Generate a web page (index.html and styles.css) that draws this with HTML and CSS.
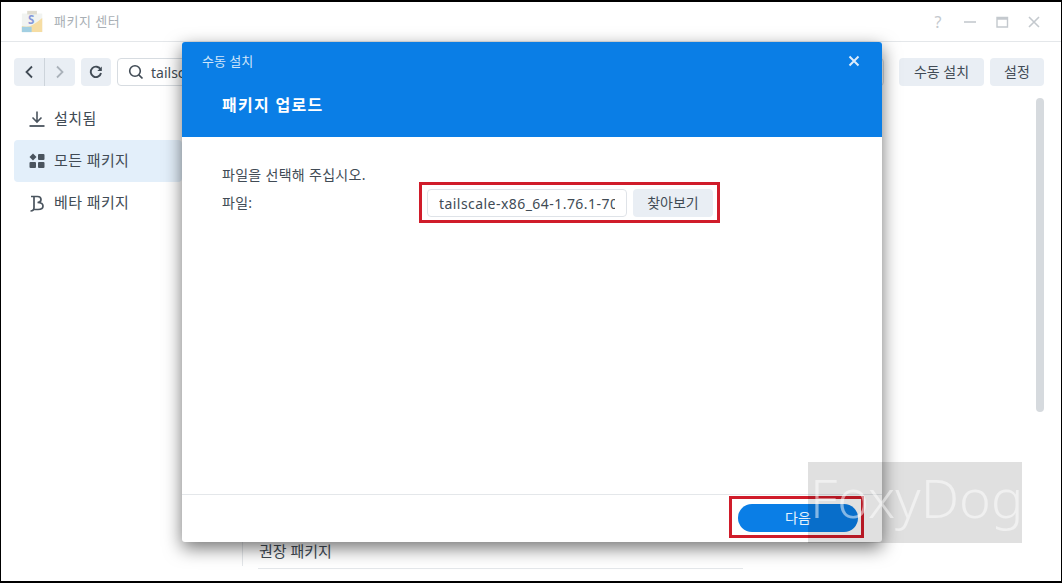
FILE: index.html
```html
<!DOCTYPE html>
<html lang="ko">
<head>
<meta charset="utf-8">
<title>패키지 센터</title>
<link rel="stylesheet" href="styles.css">
</head>
<body>
<div class="window">
  <header class="titlebar">
    <svg class="app-icon" width="23" height="23" viewBox="0 0 26 26">
      <rect x="1" y="4" width="23" height="21" fill="#eef1ee"/>
      <rect x="7" y="1" width="11" height="4" fill="#d8d4c4"/>
      <path d="M1 25V18Q8 20 13 17T24 9V25Z" fill="#f4d58d"/>
      <rect x="1" y="19" width="11" height="6" fill="#8cc4dc"/>
      <text x="8" y="16" class="app-s">S</text>
    </svg>
    <span class="app-title">패키지 센터</span>
    <div class="win-controls">
      <span class="win-q">?</span>
      <svg width="14" height="14" viewBox="0 0 14 14"><path d="M1 7H13" stroke="#c4c9ce" stroke-width="1.6"/></svg>
      <svg width="14" height="14" viewBox="0 0 14 14"><path d="M2 2.500H12.500V12H2Z" fill="none" stroke="#c4c9ce" stroke-width="1.400"/><path d="M2 3.500H12.500" stroke="#c4c9ce" stroke-width="2.500"/></svg>
      <svg width="14" height="14" viewBox="0 0 14 14"><path d="M2 2L12 12M12 2L2 12" stroke="#c4c9ce" stroke-width="1.600"/></svg>
    </div>
  </header>
  <div class="toolbar">
    <div class="nav-group">
      <span class="nav-btn"><svg width="10" height="14" viewBox="0 0 10 14"><path d="M8 1.500L2.500 7L8 12.500" fill="none" stroke="#414b55" stroke-width="1.800"/></svg></span>
      <span class="nav-btn nav-next"><svg width="10" height="14" viewBox="0 0 10 14"><path d="M2 1.500L7.500 7L2 12.500" fill="none" stroke="#aab2ba" stroke-width="1.800"/></svg></span>
    </div>
    <span class="tool-btn"><svg width="14" height="14" viewBox="0 0 14 14"><path d="M11.600 4.600A5.200 5.200 0 1 0 12 8" fill="none" stroke="#414b55" stroke-width="1.900"/><path d="M12.800 1.500V6H8.300Z" fill="#414b55"/></svg></span>
    <div class="search">
      <svg width="16" height="16" viewBox="0 0 16 16"><circle cx="7" cy="7" r="5.300" fill="none" stroke="#414b55" stroke-width="1.600"/><path d="M10.800 10.800L14.500 14.500" stroke="#414b55" stroke-width="1.700"/></svg>
      <span>tailscale</span>
    </div>
    <button class="btn btn-manual">수동 설치</button>
    <button class="btn btn-settings">설정</button>
  </div>
  <div class="content">
    <nav class="sidebar">
      <a class="side-item">
        <svg width="18" height="18" viewBox="0 0 18 18"><path d="M9 1.500V11.500M4.500 7.500L9 12L13.500 7.500" fill="none" stroke="#4a545e" stroke-width="1.600"/><path d="M1.500 16H16.500" stroke="#4a545e" stroke-width="1.800"/></svg>
        <span>설치됨</span>
      </a>
      <a class="side-item active">
        <svg width="18" height="18" viewBox="0 0 18 18" fill="#4a545e"><path d="M5 1.500L8.500 5L5 8.500L1.500 5Z"/><rect x="10" y="2" width="6.500" height="6" rx="1"/><rect x="1.500" y="10" width="6.500" height="6" rx="1"/><rect x="10" y="10" width="6.500" height="6" rx="1"/></svg>
        <span>모든 패키지</span>
      </a>
      <a class="side-item">
        <svg width="18" height="18" viewBox="0 0 18 18"><path d="M3 2.500H9.500Q13 2.500 13 5.500T9.500 8.500Q15 8.500 15 12T10 15.500H6M6 2.500V13.500Q6 17 2.500 17" fill="none" stroke="#4a545e" stroke-width="1.700"/></svg>
        <span>베타 패키지</span>
      </a>
    </nav>
    <main class="main">
      <div class="main-inner">
        <h2 class="section-title">권장 패키지</h2>
        <div class="section-rule"></div>
      </div>
      <div class="scrollbar"></div>
    </main>
  </div>

  <section class="dialog">
    <div class="dialog-head">
      <div class="dialog-topline">
        <span class="dialog-kicker">수동 설치</span>
        <svg width="12" height="12" viewBox="0 0 12 12"><path d="M1.500 1.500L10.500 10.500M10.500 1.500L1.500 10.500" stroke="#dcecfb" stroke-width="2"/></svg>
      </div>
      <h1 class="dialog-title">패키지 업로드</h1>
    </div>
    <div class="dialog-body">
      <p class="hint">파일을 선택해 주십시오.</p>
      <div class="file-row">
        <label class="file-label">파일:</label>
        <div class="file-input"><span>tailscale-x86_64-1.76.1-7000</span></div>
        <button class="btn btn-browse">찾아보기</button>
      </div>
    </div>
    <div class="dialog-foot">
      <button class="btn-next">다음</button>
    </div>
  </section>

  <div class="mark mark-file"></div>
  <div class="mark mark-next"></div>
  <div class="watermark">FoxyDog</div>
</div>
</body>
</html>
```
FILE: styles.css
```css
* { box-sizing: border-box; }
html, body { margin: 0; height: 100%; background: #000; overflow: hidden; }
body { font-family: "Noto Sans", "Noto Sans CJK KR", sans-serif; color: #414b55; }
.window {
  position: relative;
  width: 1060px;
  height: 579px;
  margin: 2px 0 0 1px;
  background: #fff;
  display: flex;
  flex-direction: column;
  overflow: hidden;
}
.titlebar {
  height: 40px;
  flex: none;
  display: flex;
  align-items: center;
  padding: 0 20px 0 20px;
  border-bottom: 1px solid #e4e7ea;
}
.app-icon { flex: none; opacity: .8; }
.app-s { font: bold 13px "Noto Sans", sans-serif; fill: #6a7fd0; }
.app-title { margin-left: 10px; font-size: 13px; letter-spacing: .5px; color: #a9afb5; padding-bottom: 2px; }
.win-controls { margin-left: auto; display: flex; align-items: center; gap: 18px; }
.win-q { font-size: 16px; color: #c4c9ce; width: 14px; text-align: center; line-height: 14px; }
.toolbar {
  height: 60px;
  flex: none;
  display: flex;
  align-items: center;
  padding: 0 17px 0 13px;
}
.nav-group { display: flex; height: 28px; border-radius: 4px; background: #e9eef4; }
.nav-btn { width: 30px; display: flex; align-items: center; justify-content: center; }
.nav-next { width: 31px; border-left: 1px solid #cdd4db; }
.tool-btn { margin-left: 6px; width: 30px; height: 28px; border-radius: 4px; background: #e9eef4; display: flex; align-items: center; justify-content: center; }
.search {
  margin-left: 6px;
  width: 767px;
  height: 28px;
  border: 1px solid #d7dce1;
  border-radius: 4px;
  display: flex;
  align-items: center;
  gap: 7px;
  padding-left: 10px;
  font-size: 14px;
}
.btn {
  border: 0;
  border-radius: 4px;
  background: #e9eef4;
  color: #414b55;
  font: 14px "Noto Sans", "Noto Sans CJK KR", sans-serif;
  height: 28px;
  padding: 0 0 2px;
}
.btn-manual { margin-left: 15px; width: 85px; }
.btn-settings { margin-left: 6px; width: 54px; }
.content { flex: 1; min-height: 0; display: flex; }
.sidebar { width: 168px; margin: -4px 0 0 13px; flex: none; }
.side-item {
  height: 42px;
  display: flex;
  align-items: center;
  gap: 8px;
  padding-left: 14px;
  font-size: 15px;
  letter-spacing: .4px;
  border-radius: 4px;
  color: #414b55;
}
.side-item span { padding-bottom: 4px; }
.side-item svg { flex: none; }
.side-item.active { background: #e3effa; }
.main { flex: 1; position: relative; padding-left: 60px; min-width: 0; }
.main-inner { height: 100%; position: relative; display: flex; flex-direction: column; justify-content: flex-end; padding-bottom: 12px; width: 501px; }
.section-title { margin: 0 0 8px 17px; font-size: 15px; font-weight: 400; line-height: 18px; }
.section-rule { margin-left: 16px; height: 1px; background: #e4e7ea; }
.main-inner::before { content: ""; position: absolute; left: 0; bottom: 15px; height: 30px; width: 1px; background: #e4e7ea; }
.scrollbar { position: absolute; top: -4px; right: 17px; width: 8px; height: 314px; border-radius: 4px; background: #d6dade; }

.dialog {
  position: absolute;
  left: 181px;
  top: 40px;
  width: 700px;
  height: 500px;
  background: #fff;
  border-radius: 3px;
  display: flex;
  flex-direction: column;
  box-shadow: 0 6px 18px rgba(0,0,0,.55);
  overflow: hidden;
}
.dialog-head { height: 95px; flex: none; background: #0a7ee6; padding: 0 22px 0 20px; color: #fff; }
.dialog-topline { height: 38px; display: flex; align-items: center; justify-content: space-between; }
.dialog-kicker { font-size: 13px; color: #cfe5fa; padding-bottom: 1px; }
.dialog-title { margin: 15px 0 0 20px; font-size: 16px; letter-spacing: 1.3px; line-height: 20px; font-weight: 700; }
.dialog-body { flex: 1; padding: 29px 40px 0; }
.hint { margin: 0; font-size: 14px; letter-spacing: .3px; line-height: 18px; }
.file-row { display: flex; align-items: center; margin-top: 5px; }
.file-label { width: 205px; font-size: 14px; letter-spacing: .3px; padding-bottom: 3px; }
.file-input {
  width: 200px;
  height: 28px;
  border: 1px solid #dfe3e8;
  border-radius: 4px;
  padding: 0 11px;
  display: flex;
  align-items: center;
  font-size: 14px;
  letter-spacing: .45px;
}
.file-input span { display: block; overflow: hidden; white-space: nowrap; width: 100%; }
.btn-browse { margin-left: 6px; width: 80px; }
.dialog-foot {
  height: 48px;
  flex: none;
  border-top: 1px solid #e4e7ea;
  display: flex;
  justify-content: flex-end;
  align-items: flex-start;
  padding: 9px 24px 0 0;
}
.btn-next {
  width: 120px;
  height: 28px;
  border: 0;
  border-radius: 14px;
  background: #0a7ee6;
  color: #e8f3fd;
  font: 14px "Noto Sans", "Noto Sans CJK KR", sans-serif;
  padding: 0 0 2px;
}
.watermark {
  position: absolute;
  left: 807px;
  top: 460px;
  width: 214px;
  height: 81px;
  background: rgba(0,0,0,.12);
  color: rgba(255,255,255,.5);
  font: 300 54px/70px "Noto Sans", sans-serif;
  white-space: nowrap;
  padding-left: 2px;
}
.mark { position: absolute; border: 3px solid #d01c2a; }
.mark-file { left: 418px; top: 180px; width: 301px; height: 41px; }
.mark-next { left: 728px; top: 494px; width: 135px; height: 42px; }
```
